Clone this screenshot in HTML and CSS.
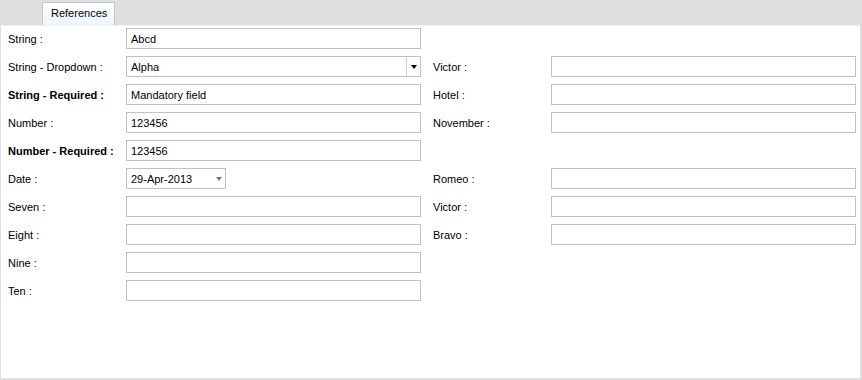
FILE: index.html
```html
<!DOCTYPE html>
<html lang="en">
<head>
    <meta charset="UTF-8">
    <title>References</title>
    <link rel="stylesheet" href="styles.css">
</head>
<body>

<div class="tab-strip">
    <div class="tab">References</div>
</div>

<div class="panel">
    <div class="form">
        <label>String :</label>
        <input type="text" value="Abcd" readonly>
        <span></span><span></span>

        <label>String - Dropdown :</label>
        <div class="combo">
            <span class="combo-text">Alpha</span>
            <span class="combo-btn"><i class="arrow"></i></span>
        </div>
        <label class="right">Victor :</label>
        <input type="text" readonly>

        <label class="req">String - Required :</label>
        <input type="text" value="Mandatory field" readonly>
        <label class="right">Hotel :</label>
        <input type="text" readonly>

        <label>Number :</label>
        <input type="text" value="123456" readonly>
        <label class="right">November :</label>
        <input type="text" readonly>

        <label class="req">Number - Required :</label>
        <input type="text" value="123456" readonly>
        <span></span><span></span>

        <label>Date :</label>
        <div class="date">
            <span>29-Apr-2013</span>
            <i class="arrow gray"></i>
        </div>
        <label class="right">Romeo :</label>
        <input type="text" readonly>

        <label>Seven :</label>
        <input type="text" readonly>
        <label class="right">Victor :</label>
        <input type="text" readonly>

        <label>Eight :</label>
        <input type="text" readonly>
        <label class="right">Bravo :</label>
        <input type="text" readonly>

        <label>Nine :</label>
        <input type="text" readonly>
        <span></span><span></span>

        <label>Ten :</label>
        <input type="text" readonly>
        <span></span><span></span>
    </div>
</div>

</body>
</html>
```

FILE: styles.css
```css
html, body {
    margin: 0;
    height: 100%;
}
body {
    font-family: "Liberation Sans", Arial, sans-serif;
    font-size: 11px;
    color: #000;
    background-color: #dfdfdf;
    overflow: hidden;
}
.tab-strip {
    height: 25px;
    box-sizing: border-box;
    padding: 2px 0 0 42px;
}
.tab {
    display: inline-block;
    box-sizing: border-box;
    height: 23px;
    padding: 4px 7px 0 8px;
    border: 1px solid #c9c9c9;
    border-bottom: none;
    background: linear-gradient(#fdfeff, #eef5fc);
    position: relative;
    z-index: 1;
}
.panel {
    margin: 0 2px 0 1px;
    height: 353px;
    background-color: #fff;
    box-sizing: border-box;
    padding: 2px 0 0 7px;
    border-top: 1px solid #f2f2f2;
}
.form {
    display: grid;
    grid-template-columns: 118px 295px 130px 305px;
    grid-auto-rows: 21px;
    row-gap: 7px;
    align-items: center;
}
.form label {
    white-space: nowrap;
}
.form label.req {
    font-weight: bold;
}
.form label.right {
    padding-left: 12px;
}
.form input,
.combo,
.date {
    box-sizing: border-box;
    height: 21px;
    border: 1px solid #c2c2c2;
    background: #fff;
    font-family: inherit;
    font-size: 11px;
    color: #000;
    margin: 0;
}
.form input {
    width: 100%;
    padding: 0 4px;
    outline: none;
}
.combo {
    display: flex;
    align-items: center;
}
.combo-text {
    flex: 1;
    padding-left: 4px;
}
.combo-btn {
    width: 13px;
    height: 100%;
    border-left: 1px solid #d0d0d0;
    display: flex;
    align-items: center;
    justify-content: center;
}
.arrow {
    width: 0;
    height: 0;
    border-left: 3.5px solid transparent;
    border-right: 3.5px solid transparent;
    border-top: 4px solid #000;
}
.arrow.gray {
    border-top-color: #7a7a7a;
    margin-right: 3px;
}
.date {
    width: 100px;
    display: flex;
    align-items: center;
    justify-content: space-between;
    padding-left: 4px;
}
```
